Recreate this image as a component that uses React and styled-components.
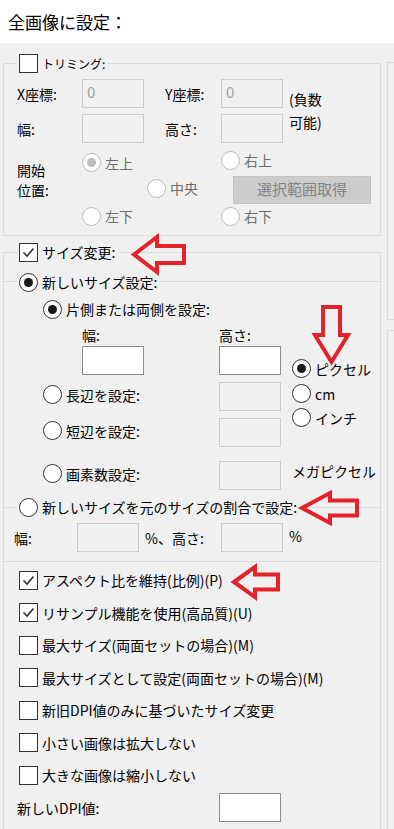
import React from "react";
import styled, { createGlobalStyle } from "styled-components";

const GlobalStyle = createGlobalStyle`
  *, *::before, *::after { box-sizing: border-box; }
  html, body { margin: 0; padding: 0; background: #f0f0f0; overflow: hidden; }
  body {
    font-family: "Noto Sans CJK JP", "Noto Sans", sans-serif;
    font-size: 14px;
    line-height: 20px;
    color: #000;
  }
`;

const Page = styled.div`
  position: relative;
  width: 394px;
  height: 829px;
  overflow: hidden;
  background: #f0f0f0;
`;

const Header = styled.header`
  height: 43px;
  background: #fff;
  display: flex;
  align-items: center;
  padding-left: 8px;
  font-size: 17px;
`;

const Main = styled.div`
  display: flex;
  gap: 6px;
  padding-left: 3px;
`;

const LeftPanel = styled.div`
  width: 378px;
  flex: none;
  padding-top: 11px;
`;

const RightColumn = styled.div`
  flex: 1;
  padding-top: 19px;
  display: flex;
  flex-direction: column;
  gap: 10px;
`;

const SideBox = styled.div`
  height: ${(p) => p.$h}px;
  border: 1px solid #dcdcdc;
  border-right: none;
`;

const Group = styled.fieldset`
  margin: ${(p) => p.$mt || 0}px 0 0;
  padding: 0 0 ${(p) => p.$pb || 0}px;
  min-width: 0;
  border: 1px solid #dcdcdc;
  ${(p) => p.$inner && "border-left: none; border-right: none;"}
  ${(p) => p.$open && "border-bottom: none;"}
`;

const Legend = styled.legend`
  margin-left: 13px;
  padding: 0 2px;
  height: 19px;
  line-height: 19px;
`;

const Option = styled.span`
  display: inline-flex;
  align-items: center;
  gap: ${(p) => (p.$gap != null ? p.$gap : 4)}px;
  white-space: nowrap;
  color: ${(p) => (p.$disabled ? "#6d6d6d" : "#000")};
  font-size: ${(p) => p.$size || 14}px;
`;

const Box = styled.span`
  width: 19px;
  height: 19px;
  flex: none;
  border: 1px solid #333;
  background: #fff;
  display: inline-flex;
  align-items: center;
  justify-content: center;
`;

const Circle = styled.span`
  width: 19px;
  height: 19px;
  flex: none;
  border-radius: 50%;
  border: 1px solid ${(p) => (p.$disabled ? "#bcbcbc" : "#333")};
  background: #fff;
  display: inline-flex;
  align-items: center;
  justify-content: center;
  &::after {
    content: "";
    width: 9px;
    height: 9px;
    border-radius: 50%;
    background: ${(p) => (p.$disabled ? "#bcbcbc" : "#1a1a1a")};
    display: ${(p) => (p.$checked ? "block" : "none")};
  }
`;

const Field = styled.input`
  width: 62px;
  height: 29px;
  flex: none;
  margin: 0;
  border: 1px solid #8c8c8c;
  background: #fff;
  padding: 0 4px 4px;
  font: inherit;
  font-size: 15px;
  color: #000;
  outline: none;
  &:disabled {
    background: #f0f0f0;
    border-color: #cccccc;
    color: #a0a0a0;
  }
`;

const TrimBody = styled.div`
  padding: 6px 0 3px 13px;
`;

const CoordGrid = styled.div`
  display: grid;
  grid-template-columns: 65px 62px 77px 62px auto;
  grid-template-rows: 29px 29px;
  row-gap: 6px;
  align-items: center;
`;

const Text = styled.span`
  padding-left: ${(p) => p.$pl || 0}px;
  white-space: nowrap;
`;

const Note = styled.div`
  grid-column: 5;
  grid-row: 1 / 3;
  padding-left: 6px;
  line-height: 23px;
`;

const PosGrid = styled.div`
  margin-top: 5px;
  display: grid;
  grid-template-columns: 65px 65px 74px auto;
  grid-template-rows: repeat(3, 28px);
  align-items: center;
`;

const Cell = styled.div`
  grid-column: ${(p) => p.$col};
  grid-row: ${(p) => p.$row};
`;

const PosLabel = styled.div`
  grid-column: 1;
  grid-row: 1 / 4;
  align-self: start;
  margin-top: 12px;
`;

const GrabButton = styled.button`
  grid-column: 4;
  grid-row: 2;
  margin: 0 0 0 12px;
  width: 138px;
  height: 28px;
  background: #cccccc;
  border: 1px solid #c4c4c4;
  color: #838383;
  font: inherit;
  font-size: 15px;
  padding: 0 0 2px;
`;

const SizeBody = styled.div`
  display: flex;
  padding-top: 6px;
`;

const LeftCol = styled.div`
  width: 288px;
  flex: none;
`;

const Row = styled.div`
  display: flex;
  align-items: center;
  height: ${(p) => p.$h || 29}px;
  margin-top: ${(p) => p.$mt || 0}px;
  padding-left: ${(p) => p.$pl || 0}px;
`;

const Slot = styled.div`
  width: ${(p) => p.$w}px;
  flex: none;
  padding-left: ${(p) => p.$pl || 0}px;
  white-space: nowrap;
`;

const UnitCol = styled.div`
  display: flex;
  flex-direction: column;
  align-items: flex-start;
  padding-top: 62px;
`;

const Unit = styled.div`
  margin-top: ${(p) => p.$mt || 0}px;
  height: ${(p) => p.$h || 19}px;
  display: flex;
  align-items: center;
  white-space: nowrap;
`;

const RatioBody = styled.div`
  padding: 6px 0 9px 10px;
`;

const Percent = styled.span`
  align-self: flex-start;
  margin-top: 3px;
  padding-left: 6px;
`;

const CheckList = styled.div`
  margin-top: 2px;
  padding-bottom: 30px;
`;

const ListRow = styled.div`
  height: 32.5px;
  display: flex;
  align-items: center;
  padding-left: ${(p) => p.$pl || 15}px;
`;

const Arrow = styled.svg`
  position: absolute;
  left: ${(p) => p.$x}px;
  top: ${(p) => p.$y}px;
  pointer-events: none;
  overflow: visible;
`;

const RED = "#e3222b";

function CheckBox({ checked, children, size }) {
  return (
    <Option $size={size}>
      <Box>
        {checked && (
          <svg width="13" height="11" viewBox="0 0 13 11">
            <polyline points="1.5,5.5 5,9 11.5,1.5" fill="none" stroke="#333" strokeWidth="1.6" />
          </svg>
        )}
      </Box>
      {children}
    </Option>
  );
}

function Radio({ checked, disabled, children }) {
  return (
    <Option $disabled={disabled}>
      <Circle $checked={checked} $disabled={disabled} />
      {children}
    </Option>
  );
}

function LeftArrow({ x, y, w, h, head }) {
  const m = h / 2;
  const s = h * 0.28;
  return (
    <Arrow $x={x} $y={y} width={w} height={h} viewBox={`0 0 ${w} ${h}`}>
      <polygon
        points={`2,${m} ${head},2 ${head},${s} ${w - 2},${s} ${w - 2},${h - s} ${head},${h - s} ${head},${h - 2}`}
        fill="none"
        stroke={RED}
        strokeWidth="4"
      />
    </Arrow>
  );
}

export default function App() {
  return (
    <Page>
      <GlobalStyle />
      <Header>全画像に設定：</Header>
      <Main>
        <LeftPanel>
          <Group $pb={0}>
            <Legend>
              <CheckBox size={12}>トリミング:</CheckBox>
            </Legend>
            <TrimBody>
              <CoordGrid>
                <Text>X座標:</Text>
                <Field disabled defaultValue="0" />
                <Text $pl={21}>Y座標:</Text>
                <Field disabled defaultValue="0" />
                <Note>
                  (負数
                  <br />
                  可能)
                </Note>
                <Text>幅:</Text>
                <Field disabled />
                <Text $pl={21}>高さ:</Text>
                <Field disabled />
              </CoordGrid>
              <PosGrid>
                <PosLabel>
                  開始
                  <br />
                  位置:
                </PosLabel>
                <Cell $col={2} $row={1}>
                  <Radio checked disabled>左上</Radio>
                </Cell>
                <Cell $col={4} $row={1}>
                  <Radio disabled>右上</Radio>
                </Cell>
                <Cell $col={3} $row={2}>
                  <Radio disabled>中央</Radio>
                </Cell>
                <GrabButton disabled>選択範囲取得</GrabButton>
                <Cell $col={2} $row={3}>
                  <Radio disabled>左下</Radio>
                </Cell>
                <Cell $col={4} $row={3}>
                  <Radio disabled>右下</Radio>
                </Cell>
              </PosGrid>
            </TrimBody>
          </Group>

          <Group $mt={7} $pb={0}>
            <Legend>
              <CheckBox checked>サイズ変更:</CheckBox>
            </Legend>

            <Group $inner $open $mt={10} $pb={8}>
              <Legend>
                <Radio checked>新しいサイズ設定:</Radio>
              </Legend>
              <SizeBody>
                <LeftCol>
                  <Row $h={24} $pl={39}>
                    <Radio checked>片側または両側を設定:</Radio>
                  </Row>
                  <Row $h={20} $mt={4} $pl={78}>
                    <Slot $w={137}>幅:</Slot>
                    <Slot $w={60}>高さ:</Slot>
                  </Row>
                  <Row $mt={1} $pl={78}>
                    <Slot $w={137}>
                      <Field />
                    </Slot>
                    <Field />
                  </Row>
                  <Row $mt={7} $pl={39}>
                    <Slot $w={176}>
                      <Radio>長辺を設定:</Radio>
                    </Slot>
                    <Field disabled />
                  </Row>
                  <Row $mt={7} $pl={39}>
                    <Slot $w={176}>
                      <Radio>短辺を設定:</Radio>
                    </Slot>
                    <Field disabled />
                  </Row>
                  <Row $mt={14} $pl={39}>
                    <Slot $w={176}>
                      <Radio>画素数設定:</Radio>
                    </Slot>
                    <Field disabled />
                  </Row>
                </LeftCol>
                <UnitCol>
                  <Unit>
                    <Radio checked>ピクセル</Radio>
                  </Unit>
                  <Unit $mt={6}>
                    <Radio>cm</Radio>
                  </Unit>
                  <Unit $mt={5}>
                    <Radio>インチ</Radio>
                  </Unit>
                  <Unit $mt={34} $h={20}>
                    メガピクセル
                  </Unit>
                </UnitCol>
              </SizeBody>
            </Group>

            <Group $inner>
              <Legend>
                <Radio>新しいサイズを元のサイズの割合で設定:</Radio>
              </Legend>
              <RatioBody>
                <Row>
                  <Slot $w={63}>幅:</Slot>
                  <Field disabled />
                  <Slot $w={82} $pl={6}>
                    %、高さ:
                  </Slot>
                  <Field disabled />
                  <Percent>%</Percent>
                </Row>
              </RatioBody>
            </Group>

            <CheckList>
              <ListRow>
                <CheckBox checked>アスペクト比を維持(比例)(P)</CheckBox>
              </ListRow>
              <ListRow>
                <CheckBox checked>リサンプル機能を使用(高品質)(U)</CheckBox>
              </ListRow>
              <ListRow>
                <CheckBox>最大サイズ(両面セットの場合)(M)</CheckBox>
              </ListRow>
              <ListRow>
                <CheckBox>最大サイズとして設定(両面セットの場合)(M)</CheckBox>
              </ListRow>
              <ListRow>
                <CheckBox>新旧DPI値のみに基づいたサイズ変更</CheckBox>
              </ListRow>
              <ListRow>
                <CheckBox>小さい画像は拡大しない</CheckBox>
              </ListRow>
              <ListRow>
                <CheckBox>大きな画像は縮小しない</CheckBox>
              </ListRow>
              <ListRow $pl={13}>
                <Slot $w={202}>新しいDPI値:</Slot>
                <Field />
              </ListRow>
            </CheckList>
          </Group>
        </LeftPanel>

        <RightColumn>
          <SideBox $h={258} />
          <SideBox $h={600} />
        </RightColumn>
      </Main>

      <LeftArrow x={132} y={235} w={54} h={39} head={25} />
      <LeftArrow x={300} y={491} w={59} h={34} head={30} />
      <LeftArrow x={232} y={565} w={48} h={34} head={23} />
      <Arrow $x={313} $y={305} width={38} height={60} viewBox="0 0 38 60">
        <polygon
          points="10,2 27,2 27,30 35,30 18.5,57 2,30 10,30"
          fill="none"
          stroke={RED}
          strokeWidth="4"
        />
      </Arrow>
    </Page>
  );
}
